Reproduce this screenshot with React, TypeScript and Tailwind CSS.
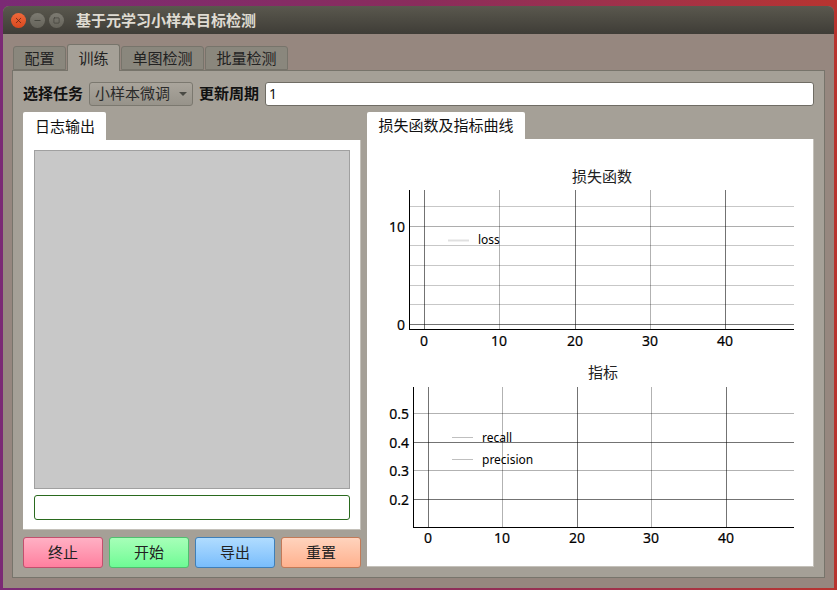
import React from 'react'
import { X, Minus, Square } from 'lucide-react'

const font = { fontFamily: '"Noto Sans", "Noto Sans CJK SC", sans-serif' }

const topTabs = [
    { label: '配置', w: 'w-[53px]', active: false },
    { label: '训练', w: 'w-[53px]', active: true },
    { label: '单图检测', w: 'w-[83px]', active: false },
    { label: '批量检测', w: 'w-[83px]', active: false },
]

const buttons = [
    { label: '终止', cls: 'from-[#ffb0c4] to-[#ff7f9f] border-[#c2506e]' },
    { label: '开始', cls: 'from-[#a6ffb8] to-[#6dfb95] border-[#4fbf6f]' },
    { label: '导出', cls: 'from-[#b0dcff] to-[#79bdfb] border-[#3f7fb8]' },
    { label: '重置', cls: 'from-[#ffd3bd] to-[#ffb18e] border-[#c27a58]' },
]

interface ChartProps {
    title: string
    titleX: number
    titleY: number
    axisX: number
    top: number
    bottom: number
    xLabelGap: number
    vLines: { x: number; o: number; label: string }[]
    hLines: { y: number; o: number }[]
    yLabels: { y: number; label: string }[]
    legend: { y: number; label: string; o: number; w: number; textY: number }[]
    legendX: number
    height: number
}

// chart coordinates are local to the svg, which starts at x=368 in the page
const Chart: React.FC<ChartProps> = ({ title, titleX, titleY, axisX, top, bottom, xLabelGap, vLines, hLines, yLabels, legend, legendX, height }) => (
    <svg width={445} height={height} className="block" style={{ fontFamily: '"Noto Sans", "Noto Sans CJK SC", sans-serif' }}>
        <text x={titleX} y={titleY} fontSize={15} fill="#222" textAnchor="middle">{title}</text>
        {vLines.map(v => (
            <line key={v.x} x1={v.x + 0.5} x2={v.x + 0.5} y1={top} y2={bottom} stroke="#000" strokeOpacity={v.o} />
        ))}
        {hLines.map(h => (
            <line key={h.y} x1={axisX} x2={426} y1={h.y + 0.5} y2={h.y + 0.5} stroke="#000" strokeOpacity={h.o} />
        ))}
        <line x1={axisX + 0.5} x2={axisX + 0.5} y1={top} y2={bottom + 1} stroke="#000" />
        <line x1={axisX} x2={426} y1={bottom + 0.5} y2={bottom + 0.5} stroke="#000" />
        {yLabels.map(l => (
            <text key={l.label} x={axisX - 4} y={l.y + 6} fontSize={14} fill="#000" stroke="#000" strokeWidth={0.2} textAnchor="end">{l.label}</text>
        ))}
        {vLines.map(v => (
            <text key={v.label} x={v.x} y={bottom + xLabelGap} fontSize={14} fill="#000" stroke="#000" strokeWidth={0.2} textAnchor="middle">{v.label}</text>
        ))}
        {legend.map(l => (
            <g key={l.label}>
                <line x1={legendX} x2={legendX + 21} y1={l.y + 0.5} y2={l.y + 0.5} stroke="#000" strokeOpacity={l.o} strokeWidth={l.w} />
                <text x={legendX + 30} y={l.textY} fontSize={12} fill="#000">{l.label}</text>
            </g>
        ))}
    </svg>
)

export default function App() {
    return (
        <div className="w-[837px] h-[590px] pl-[3px] pt-[6px] overflow-hidden bg-gradient-to-r from-[#7b2a75] via-[#8a2c5c] to-[#b8342f]" style={font}>
            <div className="w-[831px] h-[582px] flex flex-col rounded-t-[6px] overflow-hidden bg-[#96877f]">
                {/* Title bar */}
                <div className="h-[28px] shrink-0 flex items-center pl-[8px] bg-gradient-to-b from-[#5a584e] to-[#3f3d37]">
                    <div className="w-[15px] h-[15px] rounded-full bg-gradient-to-b from-[#f0693a] to-[#d9481f] flex items-center justify-center">
                        <X size={9} strokeWidth={2} className="text-[#5e2210]" />
                    </div>
                    <div className="ml-[4px] w-[15px] h-[15px] rounded-full bg-gradient-to-b from-[#7d7b72] to-[#65635a] flex items-center justify-center">
                        <Minus size={9} strokeWidth={2} className="text-[#3a3933]" />
                    </div>
                    <div className="ml-[4px] w-[15px] h-[15px] rounded-full bg-gradient-to-b from-[#7d7b72] to-[#65635a] flex items-center justify-center">
                        <Square size={7} strokeWidth={2} className="text-[#3a3933]" />
                    </div>
                    <span className="ml-[12px] text-[15px] font-bold text-[#dfdbd2]">基于元学习小样本目标检测</span>
                </div>

                <div className="flex-1 flex flex-col px-[9px] pt-[10px] pb-[10px]">
                    {/* Top tabs */}
                    <div className="h-[26px] shrink-0 flex items-end pl-px gap-px relative z-10">
                        {topTabs.map(t => (
                            <div
                                key={t.label}
                                className={`${t.w} flex items-center justify-center rounded-t-[3px] border border-[#77746b] text-[15px] text-[#222] ${t.active ? 'h-[27px] -mb-px border-b-0 bg-[#a5a097]' : 'h-[24px] bg-[#8a877d]'}`}
                            >
                                {t.label}
                            </div>
                        ))}
                    </div>

                    {/* Tab pane */}
                    <div className="flex-1 flex flex-col border border-[#77746b] bg-[#a5a097] pl-[10px] pr-[10px] pt-[10px] pb-[9px]">
                        <div className="h-[25px] shrink-0 flex items-center">
                            <span className="text-[15px] font-bold text-[#111] w-[60px]">选择任务</span>
                            <div className="ml-[6px] w-[104px] h-[24px] flex items-center justify-between pl-[5px] pr-[5px] rounded-[3px] border border-[#7b786f] bg-gradient-to-b from-[#aaa59c] to-[#97938a] text-[15px] text-[#2a2a2a]">
                                <span>小样本微调</span>
                                <div className="w-0 h-0 border-l-[4px] border-r-[4px] border-t-[4px] border-l-transparent border-r-transparent border-t-[#4a4a44]" />
                            </div>
                            <span className="ml-[6px] text-[15px] font-bold text-[#111] w-[60px]">更新周期</span>
                            <div className="ml-[6px] flex-1 h-[24px] flex items-center pl-[3px] rounded-[3px] border border-[#6f6c64] bg-white text-[14px] text-[#111]">1</div>
                        </div>

                        <div className="flex-1 flex mt-[6px] gap-[6px]">
                            {/* Left column */}
                            <div className="w-[338px] flex flex-col">
                                <div className="h-[28px] w-[83px] shrink-0 flex items-center justify-center pl-px rounded-t-[2px] bg-white text-[15px] text-[#111]">日志输出</div>
                                <div className="h-[390px] shrink-0 flex flex-col bg-white pl-[11px] pr-[10px] pt-[10px] border-b border-r border-[#c4c1ba]">
                                    <div className="h-[339px] shrink-0 bg-[#c8c8c8] border border-[#a0a0a0]" />
                                    <div className="h-[25px] mt-[6px] shrink-0 bg-white border border-[#2a6a1e] rounded-[3px]" />
                                </div>
                                <div className="flex justify-between mt-[7px]">
                                    {buttons.map(b => (
                                        <div key={b.label} className={`w-[80px] h-[31px] flex items-center justify-center rounded-[3px] border bg-gradient-to-b text-[15px] text-[#222] ${b.cls}`}>
                                            {b.label}
                                        </div>
                                    ))}
                                </div>
                            </div>

                            {/* Right column */}
                            <div className="flex-1 flex flex-col">
                                <div className="h-[27px] w-[158px] shrink-0 flex items-center justify-center rounded-t-[2px] bg-white text-[15px] text-[#111]">损失函数及指标曲线</div>
                                <div className="h-[428px] shrink-0 bg-white pt-[24px] pl-px border-b border-r border-[#c4c1ba]">
                                    <Chart
                                        title="损失函数"
                                        titleX={234}
                                        titleY={19}
                                        axisX={41}
                                        top={27}
                                        bottom={166}
                                        xLabelGap={17}
                                        height={197}
                                        vLines={[
                                            { x: 56, o: 0.55, label: '0' },
                                            { x: 131, o: 0.3, label: '10' },
                                            { x: 207, o: 0.55, label: '20' },
                                            { x: 282, o: 0.3, label: '30' },
                                            { x: 357, o: 0.55, label: '40' },
                                        ]}
                                        hLines={[
                                            { y: 43, o: 0.22 },
                                            { y: 63, o: 0.32 },
                                            { y: 82, o: 0.22 },
                                            { y: 102, o: 0.22 },
                                            { y: 122, o: 0.22 },
                                            { y: 141, o: 0.22 },
                                            { y: 161, o: 0.55 },
                                        ]}
                                        yLabels={[{ y: 63, label: '10' }, { y: 161, label: '0' }]}
                                        legendX={80}
                                        legend={[{ y: 77, label: 'loss', o: 0.12, w: 2, textY: 81 }]}
                                    />
                                    <Chart
                                        title="指标"
                                        titleX={235}
                                        titleY={18}
                                        axisX={45}
                                        top={27}
                                        bottom={167}
                                        xLabelGap={16}
                                        height={190}
                                        vLines={[
                                            { x: 60, o: 0.55, label: '0' },
                                            { x: 134, o: 0.3, label: '10' },
                                            { x: 209, o: 0.55, label: '20' },
                                            { x: 283, o: 0.3, label: '30' },
                                            { x: 358, o: 0.55, label: '40' },
                                        ]}
                                        hLines={[
                                            { y: 53, o: 0.3 },
                                            { y: 82, o: 0.55 },
                                            { y: 110, o: 0.3 },
                                            { y: 139, o: 0.55 },
                                        ]}
                                        yLabels={[
                                            { y: 53, label: '0.5' },
                                            { y: 82, label: '0.4' },
                                            { y: 110, label: '0.3' },
                                            { y: 139, label: '0.2' },
                                        ]}
                                        legendX={84}
                                        legend={[
                                            { y: 77, label: 'recall', o: 0.25, w: 1, textY: 82 },
                                            { y: 99, label: 'precision', o: 0.25, w: 1, textY: 104 },
                                        ]}
                                    />
                                </div>
                            </div>
                        </div>
                    </div>
                </div>
            </div>
        </div>
    )
}
